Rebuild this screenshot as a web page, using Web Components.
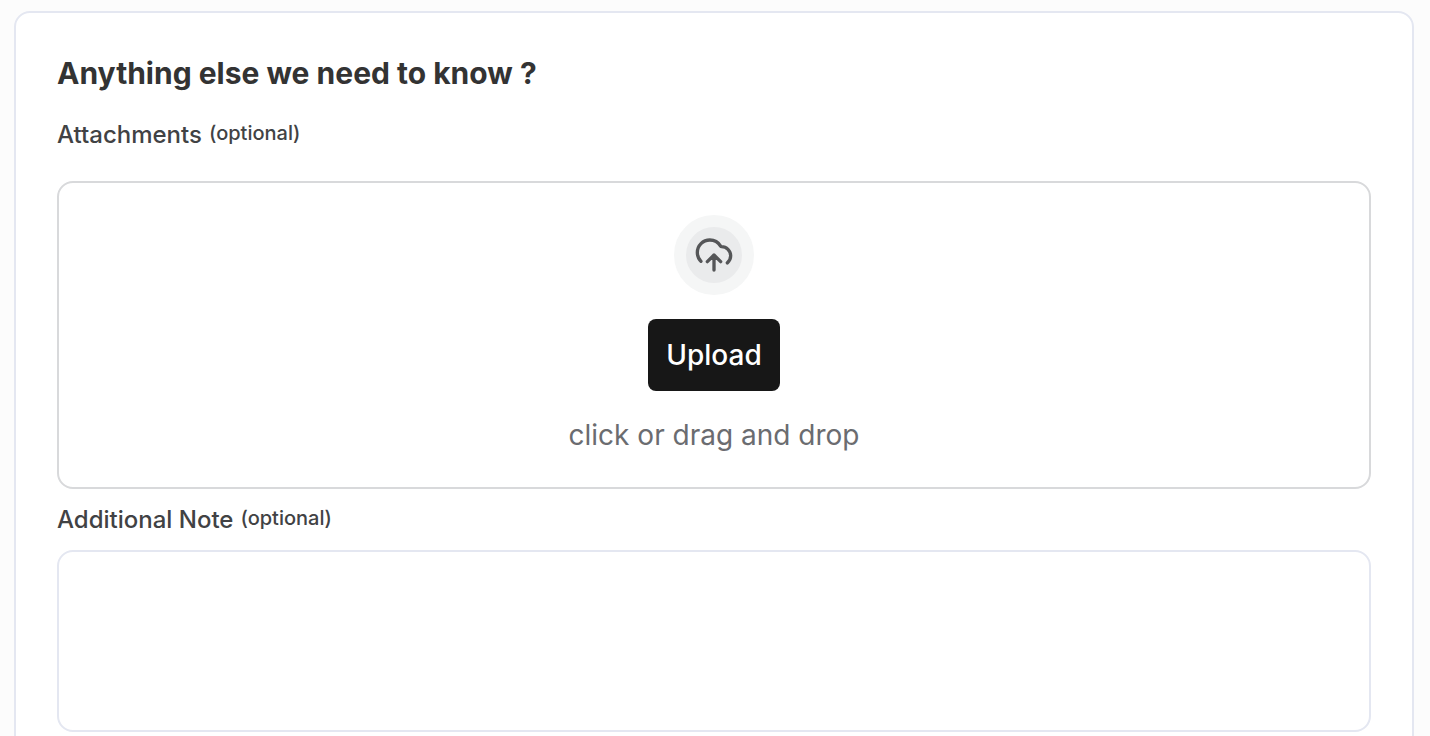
<!DOCTYPE html>
<html lang="en">
<head>
<meta charset="utf-8">
<meta name="viewport" content="width=device-width, initial-scale=1">
<title>Anything else we need to know ?</title>
<style>
  body {
    margin: 0;
    padding: 11px 16px 40px 14px;
    background: #fcfcfc;
    color: #414244;
    font-family: Inter, "Liberation Sans", sans-serif;
    font-optical-sizing: none;
  }
</style>
</head>
<body>
<details-card>
  <span slot="title">Anything else we need to know ?</span>
  <upload-field></upload-field>
  <note-field></note-field>
</details-card>

<script>
  const labelStyles = `
    .label { display: flex; align-items: baseline; gap: 7px; font-size: 24px; line-height: 32px; font-weight: 500; }
    .label small { font-size: 20px; line-height: 28px; align-self: flex-start; }
  `;

  customElements.define('details-card', class extends HTMLElement {
    constructor() {
      super();
      this.attachShadow({ mode: 'open' }).innerHTML = `
        <style>
          :host { display: block; box-sizing: border-box; padding: 40px 41px; border: 2px solid #e4e7f1; border-radius: 16px; background: #fff; }
          h2 { margin: 0 0 26px; color: #333; font-size: 30px; line-height: 40px; font-weight: 700; }
        </style>
        <h2><slot name="title"></slot></h2>
        <slot></slot>`;
    }
  });

  customElements.define('upload-badge', class extends HTMLElement {
    constructor() {
      super();
      this.attachShadow({ mode: 'open' }).innerHTML = `
        <style>
          :host { display: flex; align-items: center; justify-content: center; box-sizing: border-box; width: 80px; height: 80px; border: 12px solid #f5f6f6; border-radius: 50%; background: #eaebec; }
          svg { width: 40px; height: 40px; flex: none; }
        </style>
        <svg viewBox="0 0 20 20" fill="none" stroke="#555658" stroke-width="1.667" stroke-linecap="round" stroke-linejoin="round" aria-hidden="true">
          <path d="M6.667 13.333 10 10M10 10l3.333 3.333M10 10v7.5M16.667 13.952c1.018-.84 1.666-2.112 1.666-3.535 0-2.532-2.052-4.584-4.583-4.584-.182 0-.353-.095-.445-.252C12.218 3.737 10.212 2.5 7.917 2.5c-3.452 0-6.25 2.798-6.25 6.25 0 1.722.696 3.281 1.822 4.411"/>
        </svg>`;
    }
  });

  customElements.define('upload-field', class extends HTMLElement {
    constructor() {
      super();
      this.attachShadow({ mode: 'open' }).innerHTML = `
        <style>
          :host { display: block; }
          ${labelStyles}
          .zone { display: flex; flex-direction: column; align-items: center; gap: 24px; margin-top: 30px; padding: 32px; border: 2px solid #d8d9db; border-radius: 16px; }
          button { padding: 16px 18px; border: 0; border-radius: 8px; background: #171717; color: #fff; font: 500 28px/40px Inter, "Liberation Sans", sans-serif; font-optical-sizing: none; cursor: pointer; }
          p { margin: 0; color: #6b6c70; font-size: 28px; line-height: 40px; }
        </style>
        <div class="label" id="name"><span>Attachments</span><small>(optional)</small></div>
        <div class="zone" role="group" aria-labelledby="name">
          <upload-badge></upload-badge>
          <button type="button">Upload</button>
          <p>click or drag and drop</p>
        </div>`;
    }
  });

  customElements.define('note-field', class extends HTMLElement {
    constructor() {
      super();
      this.attachShadow({ mode: 'open' }).innerHTML = `
        <style>
          :host { display: block; margin-top: 15px; }
          ${labelStyles}
          textarea { display: block; box-sizing: border-box; width: 100%; height: 182px; margin: 14px 0 0; padding: 16px; border: 2px solid #e4e7f1; border-radius: 16px; background: #fff; color: inherit; font: 24px/32px Inter, "Liberation Sans", sans-serif; resize: none; outline: none; }
          textarea:focus { border-color: #b4b9c8; }
        </style>
        <label class="label" for="note"><span>Additional Note</span><small>(optional)</small></label>
        <textarea id="note"></textarea>`;
    }
  });
</script>
</body>
</html>
